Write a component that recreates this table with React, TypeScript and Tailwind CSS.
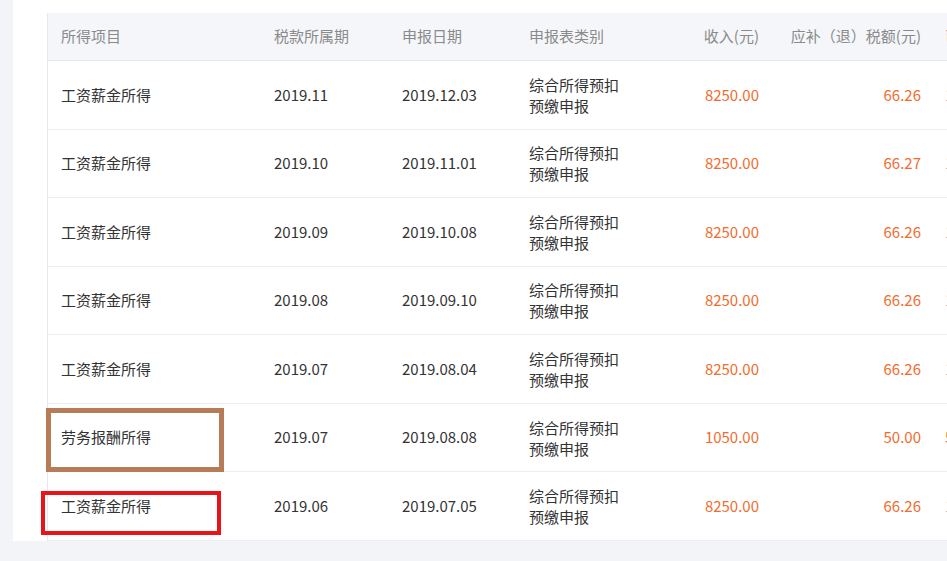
const rows = [
  { item: "工资薪金所得", period: "2019.11", date: "2019.12.03", income: "8250.00", tax: "66.26", extra: "1" },
  { item: "工资薪金所得", period: "2019.10", date: "2019.11.01", income: "8250.00", tax: "66.27", extra: "1" },
  { item: "工资薪金所得", period: "2019.09", date: "2019.10.08", income: "8250.00", tax: "66.26", extra: "1" },
  { item: "工资薪金所得", period: "2019.08", date: "2019.09.10", income: "8250.00", tax: "66.26", extra: "1" },
  { item: "工资薪金所得", period: "2019.07", date: "2019.08.04", income: "8250.00", tax: "66.26", extra: "1" },
  { item: "劳务报酬所得", period: "2019.07", date: "2019.08.08", income: "1050.00", tax: "50.00", extra: "5" },
  { item: "工资薪金所得", period: "2019.06", date: "2019.07.05", income: "8250.00", tax: "66.26", extra: "1" },
];

const cols = "grid grid-cols-[213px_128px_127px_145px_112px_160px_220px]";

export default function App() {
  return (
    <div
      className="relative w-[947px] h-[561px] overflow-hidden bg-[#f3f4f7] text-[15px]"
      style={{ fontFamily: '"Noto Sans CJK SC", "Noto Sans", sans-serif' }}
    >
      <div className="ml-[13px] bg-white pl-[34px] pt-[13px]">
        <div className="w-[1105px] border-l border-[#e6e8ec]">
          {/* header */}
          <div className={`${cols} h-[48px] items-center bg-[#f5f6f9] border-b border-[#e4e7ec] text-[#8a8a8a]`}>
            <div className="pl-[13px]">所得项目</div>
            <div className="pl-[13px]">税款所属期</div>
            <div className="pl-[13px]">申报日期</div>
            <div className="pl-[13px]">申报表类别</div>
            <div className="pr-[14px] text-right">收入(元)</div>
            <div className="pr-[12px] text-right">应补（退）税额(元)</div>
            <div className="pl-[12px]">已缴税额(元)</div>
          </div>

          {rows.map((r, i) => (
            <div
              key={i}
              className={`${cols} h-[68.57px] items-center border-b border-[#eceef2] text-[#333]`}
            >
              <div className="pl-[13px]">{r.item}</div>
              <div className="pl-[13px]">{r.period}</div>
              <div className="pl-[13px]">{r.date}</div>
              <div className="pl-[13px] leading-[21px]">
                综合所得预扣
                <br />
                预缴申报
              </div>
              <div className="pr-[14px] text-right text-[#f26c2d]">{r.income}</div>
              <div className="pr-[12px] text-right text-[#f26c2d]">{r.tax}</div>
              <div className={`pl-[12px] ${r.extra === "5" ? "text-[#f26c2d]" : "text-[#999]"}`}>
                {r.extra}
              </div>
            </div>
          ))}
        </div>
      </div>

      {/* annotation boxes */}
      <div className="absolute left-[46px] top-[408px] w-[178px] h-[64px] border-[5px] border-[#b77b58]" />
      <div className="absolute left-[41px] top-[491px] w-[180px] h-[44px] border-4 border-[#e8141c]" />
    </div>
  );
}
